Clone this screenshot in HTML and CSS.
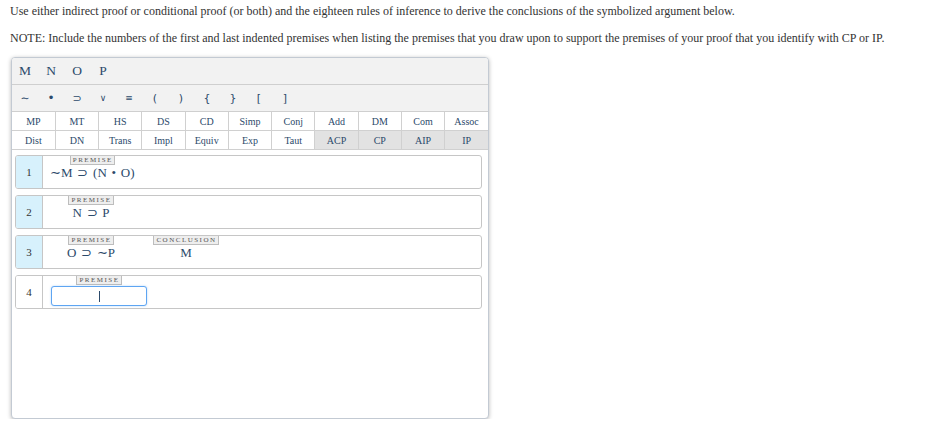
FILE: index.html
```html
<!DOCTYPE html>
<html>
<head>
<meta charset="utf-8">
<link rel="stylesheet" href="styles.css">
</head>
<body>
<p class="intro">Use either indirect proof or conditional proof (or both) and the eighteen rules of inference to derive the conclusions of the symbolized argument below.</p>
<p class="intro">NOTE: Include the numbers of the first and last indented premises when listing the premises that you draw upon to support the premises of your proof that you identify with CP or IP.</p>

<div class="widget">
  <div class="bar vars">
    <span class="key">M</span><span class="key">N</span><span class="key">O</span><span class="key">P</span>
  </div>
  <div class="bar ops">
    <span class="key op">∼</span><span class="key op dot">•</span><span class="key op">⊃</span><span class="key op small">∨</span><span class="key op small">≡</span><span class="key op">(</span><span class="key op">)</span><span class="key op">{</span><span class="key op">}</span><span class="key op">[</span><span class="key op">]</span>
  </div>
  <table class="rules">
    <tr><td>MP</td><td>MT</td><td>HS</td><td>DS</td><td>CD</td><td>Simp</td><td>Conj</td><td>Add</td><td>DM</td><td>Com</td><td>Assoc</td></tr>
    <tr><td>Dist</td><td>DN</td><td>Trans</td><td>Impl</td><td>Equiv</td><td>Exp</td><td>Taut</td><td class="alt">ACP</td><td class="alt">CP</td><td class="alt">AIP</td><td class="alt">IP</td></tr>
  </table>
  <div class="proof">
    <div class="line given">
      <div class="num">1</div>
      <div class="cells">
        <div class="cell"><span class="tag">Premise</span><span class="formula">∼M ⊃ (N • O)</span></div>
      </div>
    </div>
    <div class="line given">
      <div class="num">2</div>
      <div class="cells">
        <div class="cell"><span class="tag">Premise</span><span class="formula">N ⊃ P</span></div>
      </div>
    </div>
    <div class="line given">
      <div class="num">3</div>
      <div class="cells">
        <div class="cell"><span class="tag">Premise</span><span class="formula">O ⊃ ∼P</span></div>
        <div class="cell concl"><span class="tag">Conclusion</span><span class="formula">M</span></div>
      </div>
    </div>
    <div class="line">
      <div class="num">4</div>
      <div class="cells">
        <div class="cell entry"><span class="tag">Premise</span><span class="input"><span class="caret"></span></span></div>
      </div>
    </div>
  </div>
</div>
</body>
</html>
```

FILE: styles.css
```css
html, body {
  margin: 0;
  padding: 0;
  background: #fff;
}
body {
  padding: 4px 10px 0 10px;
  font-family: "Liberation Serif", "Times New Roman", serif;
  color: #333;
}
.intro {
  margin: 0 0 13px 0;
  font-size: 12px;
  line-height: 14px;
}
.intro + .intro {
  margin-bottom: 12px;
}
.widget {
  margin: 0 0 0 1px;
  width: 476px;
  height: 360px;
  border: 1px solid #c3cad3;
  border-radius: 4px;
  box-shadow: 0 1px 4px rgba(0, 0, 0, 0.28);
  background: #fff;
  overflow: hidden;
}
.bar {
  display: flex;
  background: #f2f2f2;
  border-bottom: 1px solid #cfcfcf;
}
.vars {
  height: 26px;
  align-items: center;
}
.ops {
  height: 26px;
  align-items: center;
}
.key {
  width: 26px;
  text-align: center;
  color: #2c4a6b;
  font-size: 13.5px;
}
.op {
  font-family: "DejaVu Sans", sans-serif;
  font-size: 11px;
  color: #2c4a6b;
}
.op.dot { font-size: 12px; }
.op.small { font-size: 9px; }
.rules {
  width: 100%;
  border-collapse: collapse;
  table-layout: fixed;
}
.rules td {
  height: 18px;
  padding: 0;
  text-align: center;
  font-size: 10px;
  color: #2c4a6b;
  border: 1px solid #d0d0d0;
  border-top: none;
  background: #fff;
}
.rules tr td:first-child { border-left: none; }
.rules tr td:last-child { border-right: none; }
.rules td.alt { background: #e2e2e2; }
.proof {
  padding: 5px 6px 0 3px;
  display: flex;
  flex-direction: column;
  gap: 6px;
}
.line {
  display: flex;
  height: 32px;
  border: 1px solid #c6c6c6;
  border-radius: 3px;
  overflow: hidden;
}
.num {
  width: 26px;
  border-right: 1px solid #c6c6c6;
  display: flex;
  align-items: center;
  justify-content: center;
  font-size: 11px;
  color: #333;
  background: #fff;
}
.given .num { background: #d7f1fc; }
.cells {
  display: flex;
  gap: 13px;
  padding-left: 7px;
}
.cell {
  display: flex;
  flex-direction: column;
  align-items: center;
  min-width: 82px;
}
.entry { min-width: 96px; padding-left: 1px; }
.tag {
  display: block;
  font-size: 7px;
  line-height: 8px;
  text-transform: uppercase;
  letter-spacing: 1.5px;
  padding: 0 1px 0 2px;
  color: #555;
  background: #eeeeee;
  border: 1px solid #bdbdbd;
  border-top: none;
}
.formula {
  font-size: 13px;
  line-height: 14px;
  margin-top: 1px;
  word-spacing: 1.5px;
  color: #2c4a6b;
  white-space: nowrap;
}
.input {
  display: flex;
  align-items: center;
  justify-content: center;
  width: 94px;
  height: 18px;
  margin-top: 1px;
  border: 1px solid #5ea5f2;
  border-radius: 3px;
  box-shadow: 0 0 2px rgba(94, 165, 242, 0.5);
  background: #fff;
}
.caret {
  width: 1px;
  height: 11px;
  background: #2c4a6b;
}
```
